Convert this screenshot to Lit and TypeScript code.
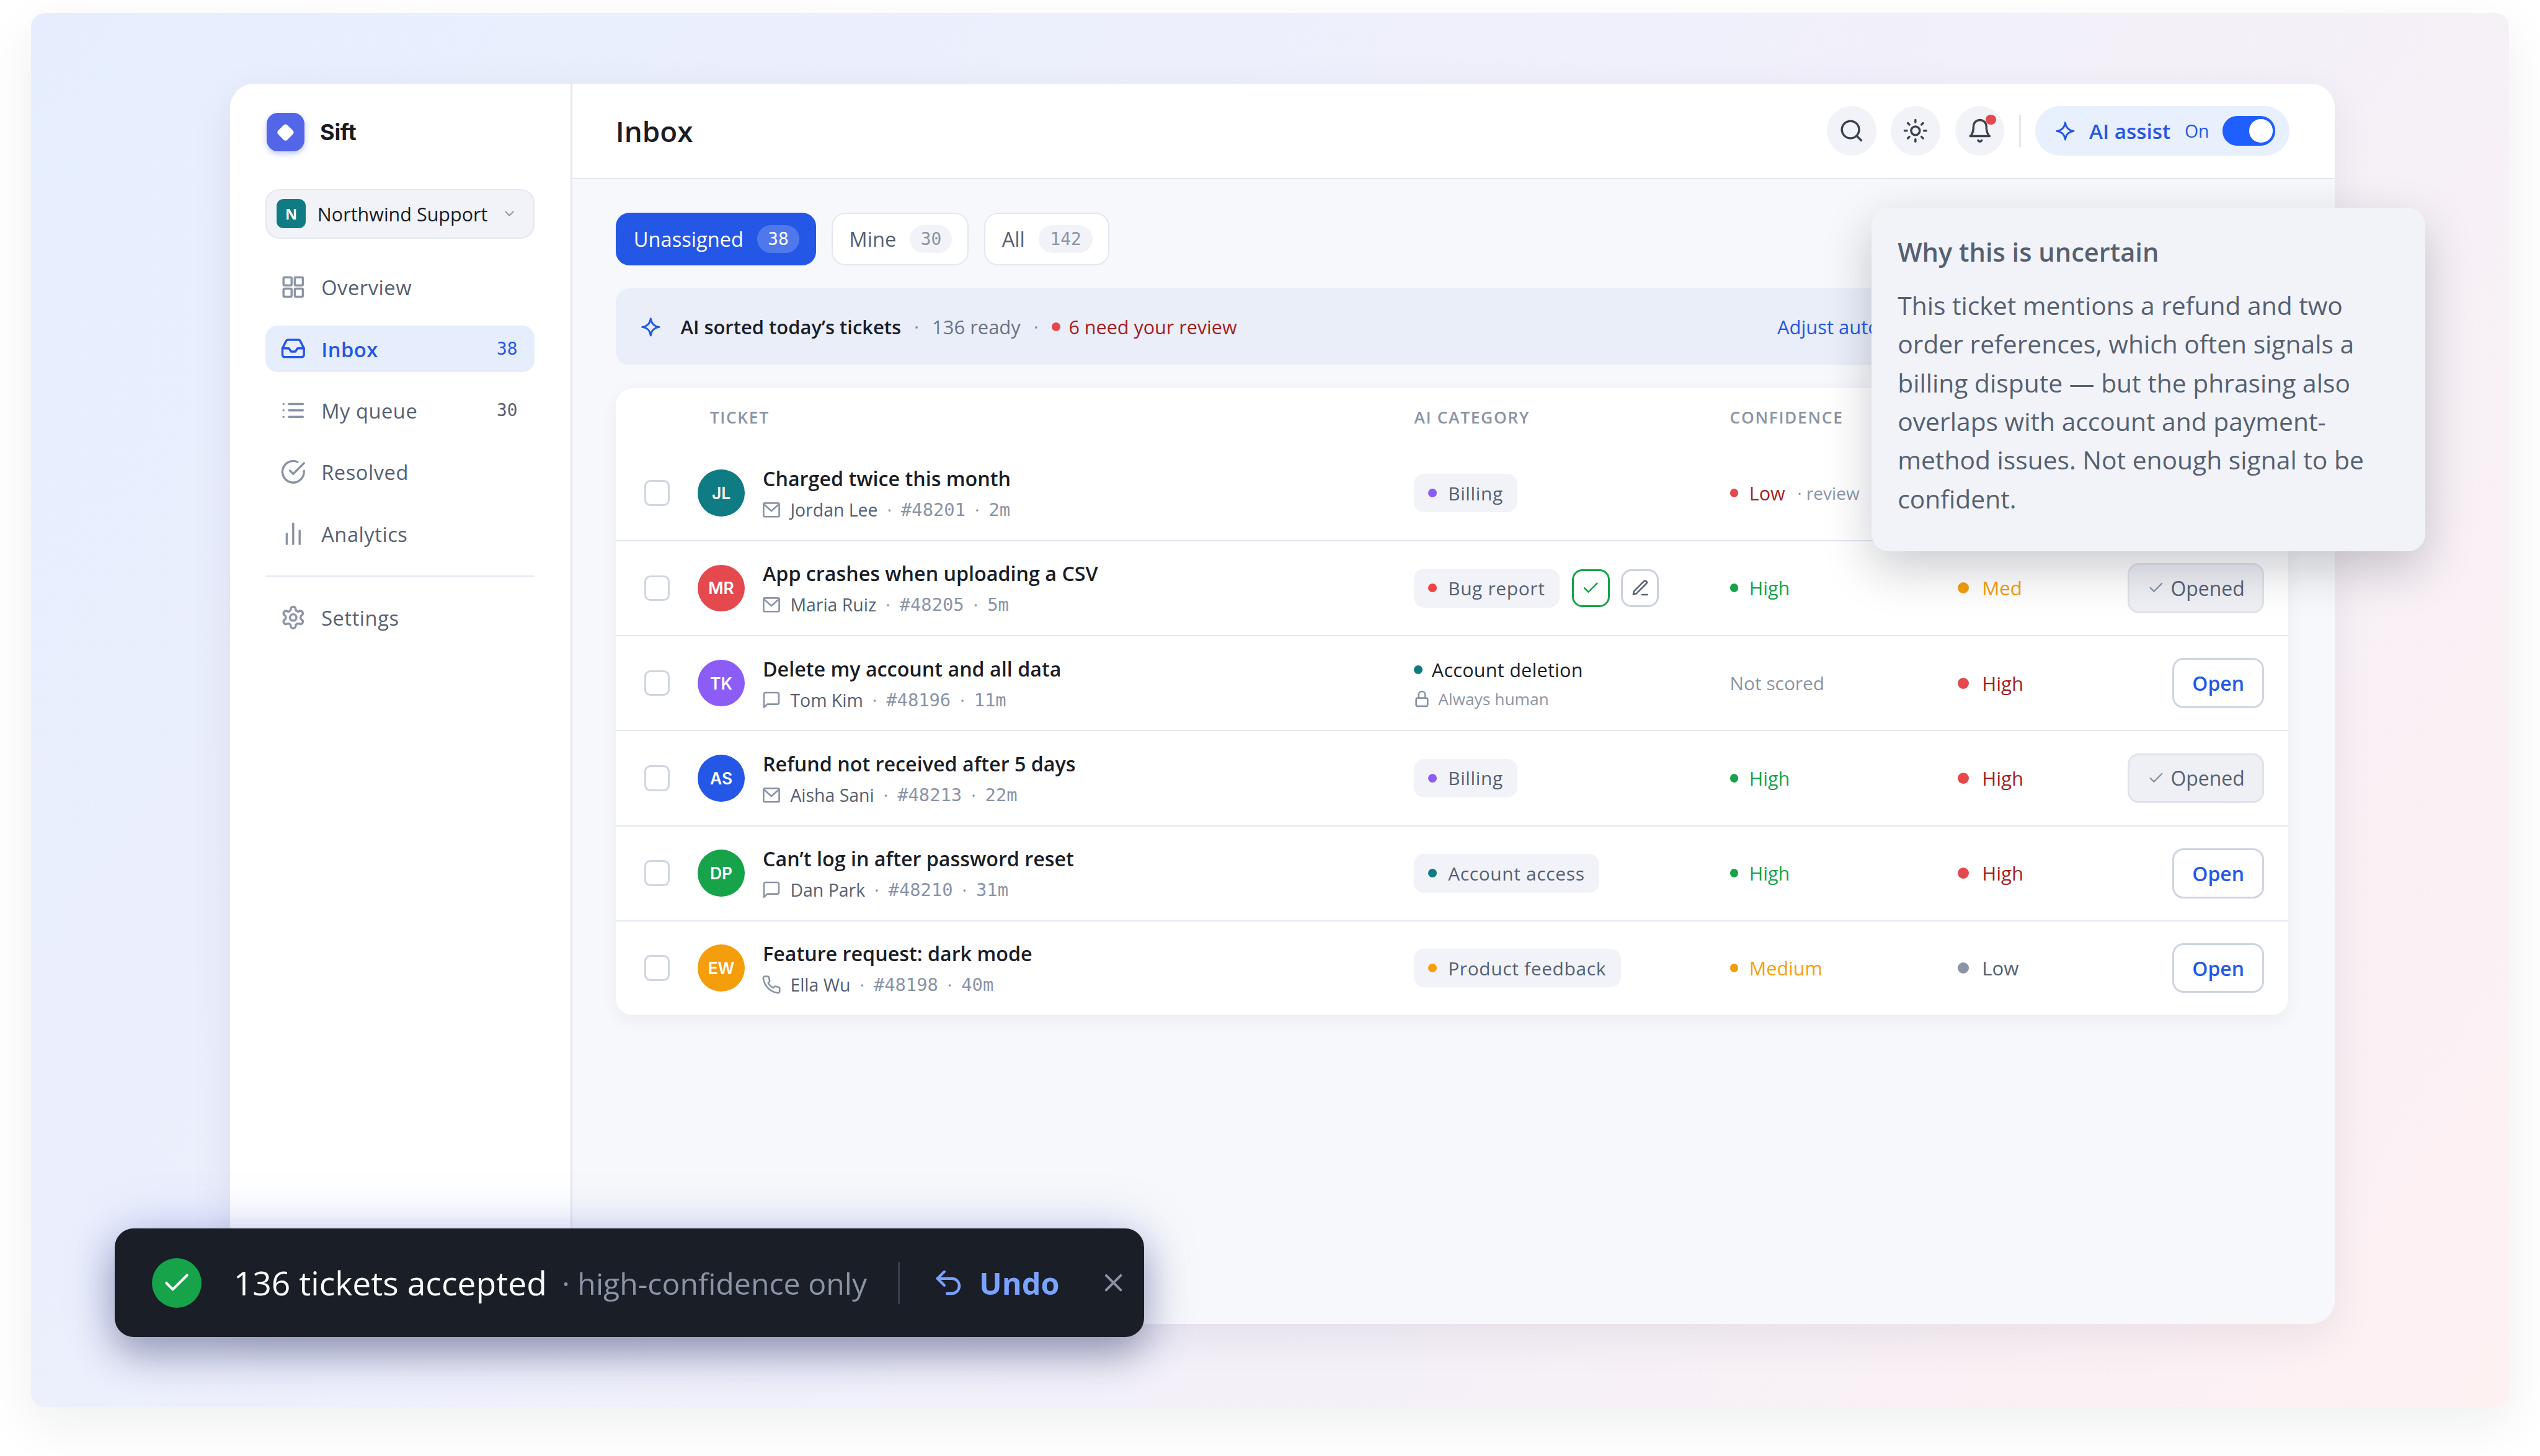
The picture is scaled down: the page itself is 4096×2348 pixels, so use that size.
import { LitElement, html, css, svg, nothing } from 'lit';
import { customElement } from 'lit/decorators.js';

// All lengths are in reference pixels; :host zoom brings them down to the window.
const icon = (size: number, body: unknown, sw = 2) => html`<svg class="ico" width=${size} height=${size} viewBox="0 0 24 24" fill="none" stroke="currentColor" stroke-width=${sw} stroke-linecap="round" stroke-linejoin="round">${body}</svg>`;

const P = {
  grid: svg`<rect x="3" y="3" width="7.5" height="7.5" rx="1"/><rect x="13.5" y="3" width="7.5" height="7.5" rx="1"/><rect x="3" y="13.5" width="7.5" height="7.5" rx="1"/><rect x="13.5" y="13.5" width="7.5" height="7.5" rx="1"/>`,
  inbox: svg`<path d="M22 12h-6l-2 3h-4l-2-3H2"/><path d="M5.45 5.11 2 12v6a2 2 0 0 0 2 2h16a2 2 0 0 0 2-2v-6l-3.45-6.89A2 2 0 0 0 16.76 4H7.24a2 2 0 0 0-1.79 1.11z"/>`,
  list: svg`<path d="M8 6h13"/><path d="M8 12h13"/><path d="M8 18h13"/><path d="M3 6h.01"/><path d="M3 12h.01"/><path d="M3 18h.01"/>`,
  done: svg`<path d="M22 11.08V12a10 10 0 1 1-5.93-9.14"/><path d="m9 11 3 3L22 4"/>`,
  bars: svg`<path d="M12 2.5v19"/><path d="M6 12v9.5"/><path d="M18 9v12.5"/>`,
  gear: svg`<path d="M12.22 2h-.44a2 2 0 0 0-2 2v.18a2 2 0 0 1-1 1.73l-.43.25a2 2 0 0 1-2 0l-.15-.08a2 2 0 0 0-2.73.73l-.22.38a2 2 0 0 0 .73 2.73l.15.1a2 2 0 0 1 1 1.72v.51a2 2 0 0 1-1 1.74l-.15.09a2 2 0 0 0-.73 2.73l.22.38a2 2 0 0 0 2.73.73l.15-.08a2 2 0 0 1 2 0l.43.25a2 2 0 0 1 1 1.73V20a2 2 0 0 0 2 2h.44a2 2 0 0 0 2-2v-.18a2 2 0 0 1 1-1.73l.43-.25a2 2 0 0 1 2 0l.15.08a2 2 0 0 0 2.73-.73l.22-.39a2 2 0 0 0-.73-2.73l-.15-.08a2 2 0 0 1-1-1.74v-.5a2 2 0 0 1 1-1.74l.15-.09a2 2 0 0 0 .73-2.73l-.22-.38a2 2 0 0 0-2.73-.73l-.15.08a2 2 0 0 1-2 0l-.43-.25a2 2 0 0 1-1-1.73V4a2 2 0 0 0-2-2z"/><circle cx="12" cy="12" r="3"/>`,
  mail: svg`<rect x="2.5" y="4" width="19" height="16.5" rx="1.5"/><path d="m3 5.5 9 8 9-8"/>`,
  chat: svg`<path d="M21 15a2 2 0 0 1-2 2H7l-4 4V5a2 2 0 0 1 2-2h14a2 2 0 0 1 2 2z"/>`,
  phone: svg`<path d="M22 16.92v3a2 2 0 0 1-2.18 2 19.79 19.79 0 0 1-8.63-3.07 19.5 19.5 0 0 1-6-6 19.79 19.79 0 0 1-3.07-8.67A2 2 0 0 1 4.11 2h3a2 2 0 0 1 2 1.72 12.84 12.84 0 0 0 .7 2.81 2 2 0 0 1-.45 2.11L8.09 9.91a16 16 0 0 0 6 6l1.27-1.27a2 2 0 0 1 2.11-.45 12.84 12.84 0 0 0 2.81.7A2 2 0 0 1 22 16.92z"/>`,
  lock: svg`<rect x="5" y="11" width="14" height="10" rx="2"/><path d="M8 11V7a4 4 0 0 1 8 0v4"/>`,
  search: svg`<circle cx="11" cy="11" r="8"/><path d="m21 21-4.3-4.3"/>`,
  sun: svg`<circle cx="12" cy="12" r="4"/><path d="M12 2v2"/><path d="M12 20v2"/><path d="m4.93 4.93 1.41 1.41"/><path d="m17.66 17.66 1.41 1.41"/><path d="M2 12h2"/><path d="M20 12h2"/><path d="m6.34 17.66-1.41 1.41"/><path d="m19.07 4.93-1.41 1.41"/>`,
  bell: svg`<path d="M6 8a6 6 0 0 1 12 0c0 7 3 9 3 9H3s3-2 3-9"/><path d="M10.3 21a1.94 1.94 0 0 0 3.4 0"/>`,
  spark: svg`<path d="M12 2.5c.7 5.6 3.9 8.8 9.5 9.5-5.6.7-8.8 3.9-9.5 9.5-.7-5.6-3.9-8.8-9.5-9.5 5.6-.7 8.8-3.9 9.5-9.5z"/>`,
  check: svg`<path d="M20 6 9 17l-5-5"/>`,
  pencil: svg`<path d="M14 20.5h7"/><path d="M16.5 3.5a2.12 2.12 0 0 1 3 3L7 19l-4 1 1-4z"/>`,
  undo: svg`<path d="M9 14 4 9l5-5"/><path d="M4 9h10.5a5.5 5.5 0 0 1 0 11H11"/>`,
  chevron: svg`<path d="m6 9 6 6 6-6"/>`,
  close: svg`<path d="M18 6 6 18"/><path d="m6 6 12 12"/>`,
};

type Tone = 'red' | 'green' | 'amber' | 'grey';

interface Ticket {
  initials: string;
  color: string;
  title: string;
  via: keyof typeof P;
  who: string;
  id: string;
  age: string;
  category: string;
  catDot: string;
  plain?: boolean;
  review?: boolean;
  conf: [Tone, string] | null;
  urgency: [Tone, string];
  opened?: boolean;
}

const TICKETS: Ticket[] = [
  { initials: 'JL', color: '#0f7b83', title: 'Charged twice this month', via: 'mail', who: 'Jordan Lee', id: '#48201', age: '2m', category: 'Billing', catDot: '#8b5cf6', conf: ['red', 'Low'], urgency: ['red', 'High'] },
  { initials: 'MR', color: '#e5484d', title: 'App crashes when uploading a CSV', via: 'mail', who: 'Maria Ruiz', id: '#48205', age: '5m', category: 'Bug report', catDot: '#ef4444', review: true, conf: ['green', 'High'], urgency: ['amber', 'Med'], opened: true },
  { initials: 'TK', color: '#8b5cf6', title: 'Delete my account and all data', via: 'chat', who: 'Tom Kim', id: '#48196', age: '11m', category: 'Account deletion', catDot: '#0f7b83', plain: true, conf: null, urgency: ['red', 'High'] },
  { initials: 'AS', color: '#2457e6', title: 'Refund not received after 5 days', via: 'mail', who: 'Aisha Sani', id: '#48213', age: '22m', category: 'Billing', catDot: '#8b5cf6', conf: ['green', 'High'], urgency: ['red', 'High'], opened: true },
  { initials: 'DP', color: '#16a34a', title: 'Can’t log in after password reset', via: 'chat', who: 'Dan Park', id: '#48210', age: '31m', category: 'Account access', catDot: '#0f7b83', conf: ['green', 'High'], urgency: ['red', 'High'] },
  { initials: 'EW', color: '#f59e0b', title: 'Feature request: dark mode', via: 'phone', who: 'Ella Wu', id: '#48198', age: '40m', category: 'Product feedback', catDot: '#f59e0b', conf: ['amber', 'Medium'], urgency: ['grey', 'Low'] },
];

const NAV: { label: string; ic: keyof typeof P; count?: string; active?: boolean }[] = [
  { label: 'Overview', ic: 'grid' },
  { label: 'Inbox', ic: 'inbox', count: '38', active: true },
  { label: 'My queue', ic: 'list', count: '30' },
  { label: 'Resolved', ic: 'done' },
  { label: 'Analytics', ic: 'bars' },
];

@customElement('app-root')
export class AppRoot extends LitElement {
  static override styles = css`
    :host {
      display: block;
      position: relative;
      zoom: 0.69377;
      width: 5904px;
      height: 3384px;
      overflow: hidden;
      background: #fff;
      color: #1a1d26;
      font-family: "Open Sans", "Noto Sans", sans-serif;
      --mono: "DejaVu Sans Mono", "Liberation Mono", monospace;
      --blue: #2457e6;
      --line: #e4e7ef;
      --grey: #8a94a6;
      --slate: #556072;
    }
    * { box-sizing: border-box; }
    .ico { display: block; flex: none; }

    .scene {
      position: absolute;
      left: 72px;
      top: 30px;
      width: 5760px;
      height: 3240px;
      padding: 165px 405px 193px 463px;
      border-radius: 32px;
      background: linear-gradient(125deg, #e6eefe 0%, #f0f0fb 50%, #fef1f2 100%);
      box-shadow: 0 40px 120px rgba(20, 24, 40, 0.07);
    }
    .window {
      display: flex;
      width: 100%;
      height: 100%;
      overflow: hidden;
      border-radius: 56px;
      background: #f7f8fb;
      box-shadow: 0 30px 100px rgba(40, 30, 60, 0.08);
    }

    .side {
      flex: none;
      width: 795px;
      padding: 68px 83px 0 82px;
      background: #fff;
      border-right: 5px solid var(--line);
    }
    .brand { display: flex; align-items: center; gap: 36px; height: 88px; margin: 0 0 88px 3px; }
    .logo {
      display: grid;
      place-items: center;
      width: 88px;
      height: 88px;
      border-radius: 26px;
      background: #5366e8;
      box-shadow: 0 6px 14px rgba(83, 102, 232, 0.35);
    }
    .logo i { width: 30px; height: 30px; border-radius: 6px; background: #fff; transform: rotate(45deg); }
    .brand b { font: 700 52px "Inter", sans-serif; letter-spacing: -0.5px; color: #1a1a1f; }
    .workspace {
      display: flex;
      align-items: center;
      height: 116px;
      padding: 0 38px 0 23px;
      margin-bottom: 58px;
      border: 4px solid var(--line);
      border-radius: 32px;
      background: #f1f3f8;
    }
    .tile {
      display: grid;
      place-items: center;
      width: 68px;
      height: 68px;
      margin-right: 27px;
      border-radius: 16px;
      background: #0f7b83;
      color: #fff;
      font-size: 34px;
      font-weight: 700;
    }
    .workspace span { flex: 1; font-size: 44px; font-weight: 500; white-space: nowrap; }
    .workspace .ico { color: var(--grey); }

    nav { display: flex; flex-direction: column; gap: 35.3px; }
    .item {
      display: flex;
      align-items: center;
      height: 108px;
      padding: 0 40px 0 34px;
      border-radius: 28px;
      color: var(--slate);
      font-size: 47px;
      letter-spacing: 0.8px;
    }
    .item .ico { color: var(--grey); margin-right: 36px; }
    .item span { flex: 1; padding-top: 3px; }
    .item em { font: 500 40px var(--mono); letter-spacing: 0; }
    .item.on { background: #e6edfc; color: var(--blue); font-weight: 600; }
    .item.on .ico { color: var(--blue); }
    .rule { height: 4px; margin: 43px 0 40px; background: var(--line); }

    main { flex: 1; min-width: 0; display: flex; flex-direction: column; }
    header {
      flex: none;
      display: flex;
      align-items: center;
      height: 221px;
      padding: 0 105px 0 101px;
      background: #fff;
      border-bottom: 4px solid var(--line);
    }
    h1 { flex: 1; margin: 0; font-size: 66px; font-weight: 600; }
    .round {
      position: relative;
      display: grid;
      place-items: center;
      width: 115px;
      height: 116px;
      margin-right: 34px;
      border-radius: 50%;
      background: #f1f3f8;
      color: #3b4352;
    }
    .ping { position: absolute; left: 72px; top: 20px; width: 24px; height: 24px; border-radius: 50%; background: #e5484d; }
    .vrule { width: 4px; height: 74px; margin-right: 34px; background: var(--line); }
    .assist {
      display: flex;
      align-items: center;
      width: 591px;
      height: 116px;
      padding: 0 34px 0 44px;
      border-radius: 58px;
      background: #e8effd;
      color: var(--blue);
      font-size: 41px;
      white-space: nowrap;
    }
    .assist b { flex: 1; font-size: 48px; font-weight: 600; margin-left: 31px; }
    .assist span { margin-right: 31px; }
    .toggle { position: relative; flex: none; width: 122px; height: 68px; border-radius: 34px; background: #1f5fff; }
    .toggle i { position: absolute; right: 6px; top: 7px; width: 54px; height: 54px; border-radius: 50%; background: #fff; }

    .body { flex: 1; padding: 78px 108px 0 102px; }
    .tabs { display: flex; gap: 36px; height: 123px; margin-bottom: 53.5px; }
    .tab {
      display: flex;
      align-items: center;
      gap: 32px;
      padding: 0 36px 0 38px;
      border: 4px solid var(--line);
      border-radius: 32px;
      background: #fff;
      color: var(--slate);
      font-size: 47px;
      font-weight: 500;
    }
    .tab em {
      display: grid;
      place-items: center;
      width: 98px;
      height: 64px;
      border-radius: 32px;
      background: #f1f3f8;
      color: var(--grey);
      font: 500 40px var(--mono);
    }
    .tab.all em { width: 126px; }
    .tab.on { border-color: var(--blue); background: var(--blue); color: #fff; }
    .tab.on em { background: rgba(255, 255, 255, 0.2); color: #fff; }

    .banner {
      display: flex;
      align-items: center;
      height: 178px;
      padding: 0 0 0 56px;
      margin-bottom: 53.5px;
      border-radius: 32px;
      background: #e9eef9;
      font-size: 44.6px;
      white-space: nowrap;
    }
    .banner .ico { color: var(--blue); margin-right: 44px; }
    .banner b { font-weight: 600; }
    .banner .sep { width: 36px; text-align: center; margin: 0 18px; color: var(--grey); }
    .banner .ready { color: #6b7485; }
    .banner .dot { width: 20px; height: 20px; margin-right: 20px; border-radius: 50%; background: #e5484d; }
    .banner .warn { flex: 1; color: #a61f1f; font-size: 44px; font-weight: 500; }
    .banner a { flex: none; width: 1188px; color: var(--blue); font-weight: 500; }

    .card {
      height: 1457px;
      overflow: hidden;
      border-radius: 40px;
      background: #fff;
      box-shadow: 0 12px 40px rgba(30, 40, 70, 0.05);
    }
    .row {
      display: grid;
      grid-template-columns: 190px 1665px 734px 530px 390px 1fr;
      align-items: center;
      height: 221px;
      border-bottom: 4px solid var(--line);
    }
    .row:last-child { border-bottom: 0; height: 217px; }
    .row.head { height: 135px; border: 0; color: var(--grey); font-size: 38px; font-weight: 600; letter-spacing: 2.4px; }
    .row.head .tick { padding-left: 28px; }
    .box { width: 60px; height: 60px; margin-left: 65px; border: 5px solid #cfd6e0; border-radius: 14px; }
    .tick { display: flex; align-items: center; gap: 42px; }
    .av {
      display: grid;
      place-items: center;
      width: 109px;
      height: 109px;
      border-radius: 50%;
      color: #fff;
      font: 600 38px "Inter", sans-serif;
    }
    .text { padding-bottom: 1px; }
    .title { font-size: 46.5px; font-weight: 600; line-height: 62px; margin-bottom: 17px; }
    .meta { display: flex; align-items: center; height: 50px; font-size: 41px; color: var(--slate); white-space: nowrap; font-weight: 500; }
    .meta .ico { color: var(--grey); margin: 0 21px 0 -3px; }
    .meta i { width: 54px; text-align: center; font-style: normal; color: var(--grey); }
    .meta u { font: 400 41.5px var(--mono); text-decoration: none; color: var(--grey); }

    .cat { display: flex; align-items: center; gap: 28px; }
    .pill {
      display: flex;
      align-items: center;
      gap: 26px;
      height: 90px;
      padding: 0 34px 0 33px;
      border-radius: 24px;
      background: #f1f3f8;
      color: var(--slate);
      font-size: 43px;
      font-weight: 500;
      letter-spacing: 1px;
    }
    .pill s { width: 20px; height: 20px; border-radius: 50%; }
    .mini { display: grid; place-items: center; width: 88px; height: 88px; margin-right: -1px; border: 5px solid #cbd2de; border-radius: 24px; color: var(--slate); }
    .mini.ok { border-color: #16a34a; color: #16a34a; }
    .plain { display: flex; flex-direction: column; gap: 20px; padding-top: 6px; }
    .plain div { display: flex; align-items: center; gap: 21px; font-size: 44px; letter-spacing: 0.4px; font-weight: 500; height: 48px; }
    .plain div s { width: 20px; height: 20px; border-radius: 50%; }
    .plain div + div { gap: 15px; color: var(--grey); font-size: 38px; letter-spacing: 0; font-weight: 400; }
    .plain div + div .ico { margin-left: -5px; }

    .lvl { display: flex; align-items: center; gap: 25px; font-size: 44px; font-weight: 500; white-space: nowrap; }
    .lvl s { width: 20px; height: 20px; border-radius: 50%; }
    .lvl.urg { gap: 30px; font-size: 45px; }
    .lvl.urg s { width: 26px; height: 26px; }
    .lvl small { margin-left: 3px; font-size: 40.5px; font-weight: 400; color: var(--grey); }
    .lvl.red { color: #a61f1f; } .lvl.red s { background: #e5484d; }
    .lvl.green { color: #16a34a; } .lvl.green s { background: #16a34a; }
    .lvl.amber { color: #f59e0b; } .lvl.amber s { background: #f59e0b; }
    .lvl.grey { color: var(--slate); } .lvl.grey s { background: var(--grey); }
    .none { color: var(--grey); font-size: 43px; }

    .act { display: flex; justify-content: flex-end; padding-right: 56px; }
    .btn {
      display: flex;
      align-items: center;
      justify-content: center;
      flex: none;
      height: 116px;
      width: 214px;
      border: 5px solid #ced5e0;
      border-radius: 26px;
      background: #fff;
      color: var(--blue);
      font-size: 46px;
      font-weight: 600;
    }
    .btn.opened { width: 317px; gap: 14px; border-color: #e0e3ea; background: #eef0f5; color: var(--slate); font-weight: 500; }
    .btn.opened .ico { color: var(--grey); }

    /* floats over the page */
    .tip {
      position: absolute;
      left: 4350px;
      top: 483px;
      width: 1287px;
      height: 799px;
      padding: 60px 61px;
      border-radius: 40px;
      background: #f1f3f8;
      box-shadow: 0 40px 110px rgba(20, 24, 40, 0.22);
      color: var(--slate);
    }
    .tip h2 { margin: 0 0 37px; font-size: 60px; line-height: 84px; font-weight: 600; }
    .tip p { margin: 0; font-size: 58.8px; line-height: 90px; }

    .toast {
      position: absolute;
      left: 266px;
      top: 2856px;
      display: flex;
      align-items: center;
      width: 2393px;
      height: 252px;
      padding-left: 87px;
      border-radius: 44px;
      background: #1a1e27;
      box-shadow: 0 40px 90px rgba(26, 30, 60, 0.35), 0 0 130px rgba(70, 100, 240, 0.22);
      color: #fff;
      white-space: nowrap;
    }
    .okc { display: grid; place-items: center; flex: none; width: 116px; height: 116px; margin-right: 74px; border-radius: 50%; background: #16a34a; }
    .toast b { font-size: 77px; font-weight: 500; }
    .toast span { margin-left: 35px; font-size: 69.5px; color: var(--grey); }
    .toast .v { flex: none; width: 4px; height: 98px; margin: 0 76px 0 72px; background: #3a3f4c; }
    .toast .un { color: #7aa2ff; margin-right: 33px; }
    .toast strong { font-size: 70px; font-weight: 700; color: #7aa2ff; }
    .toast .x { color: var(--grey); margin-left: 92px; }
  `;

  private renderRow(t: Ticket) {
    return html`<div class="row">
      <div class="box"></div>
      <div class="tick">
        <div class="av" style="background:${t.color}">${t.initials}</div>
        <div class="text">
          <div class="title">${t.title}</div>
          <div class="meta">${icon(46, P[t.via])}${t.who}<i>·</i><u>${t.id}</u><i>·</i><u>${t.age}</u></div>
        </div>
      </div>
      ${t.plain
        ? html`<div class="plain">
            <div><s style="background:${t.catDot}"></s>${t.category}</div>
            <div>${icon(46, P.lock)}Always human</div>
          </div>`
        : html`<div class="cat">
            <div class="pill"><s style="background:${t.catDot}"></s>${t.category}</div>
            ${t.review
              ? html`<div class="mini ok">${icon(44, P.check)}</div><div class="mini">${icon(44, P.pencil)}</div>`
              : nothing}
          </div>`}
      ${t.conf
        ? html`<div class="lvl ${t.conf[0]}"><s></s>${t.conf[1]}${t.conf[1] === 'Low' ? html`<small>· review</small>` : nothing}</div>`
        : html`<div class="none">Not scored</div>`}
      <div class="lvl urg ${t.urgency[0]}"><s></s>${t.urgency[1]}</div>
      <div class="act">
        ${t.opened
          ? html`<div class="btn opened">${icon(40, P.check)}Opened</div>`
          : html`<div class="btn">Open</div>`}
      </div>
    </div>`;
  }

  override render() {
    return html`
      <div class="scene">
        <div class="window">
          <aside class="side">
            <div class="brand"><div class="logo"><i></i></div><b>Sift</b></div>
            <div class="workspace"><div class="tile">N</div><span>Northwind Support</span>${icon(36, P.chevron)}</div>
            <nav>
              ${NAV.map((n) => html`<div class="item ${n.active ? 'on' : ''}">${icon(60, P[n.ic])}<span>${n.label}</span>${n.count ? html`<em>${n.count}</em>` : nothing}</div>`)}
            </nav>
            <div class="rule"></div>
            <div class="item">${icon(60, P.gear)}<span>Settings</span></div>
          </aside>
          <main>
            <header>
              <h1>Inbox</h1>
              <div class="round">${icon(60, P.search)}</div>
              <div class="round">${icon(60, P.sun)}</div>
              <div class="round">${icon(60, P.bell)}<i class="ping"></i></div>
              <div class="vrule"></div>
              <div class="assist">${icon(50, P.spark)}<b>AI assist</b><span>On</span><div class="toggle"><i></i></div></div>
            </header>
            <div class="body">
              <div class="tabs">
                <div class="tab on">Unassigned<em>38</em></div>
                <div class="tab">Mine<em>30</em></div>
                <div class="tab all">All<em>142</em></div>
              </div>
              <div class="banner">
                ${icon(50, P.spark)}
                <b>AI sorted today’s tickets</b><span class="sep">·</span>
                <span class="ready">136 ready</span><span class="sep">·</span>
                <i class="dot"></i><span class="warn">6 need your review</span>
                <a>Adjust auto-accept</a>
              </div>
              <div class="card">
                <div class="row head">
                  <div></div>
                  <div class="tick">TICKET</div>
                  <div>AI CATEGORY</div>
                  <div>CONFIDENCE</div>
                  <div>URGENCY</div>
                </div>
                ${TICKETS.map((t) => this.renderRow(t))}
              </div>
            </div>
          </main>
        </div>
      </div>

      <div class="tip">
        <h2>Why this is uncertain</h2>
        <p>This ticket mentions a refund and two order references, which often signals a billing dispute — but the phrasing also overlaps with account and payment-method issues. Not enough signal to be confident.</p>
      </div>

      <div class="toast">
        <div class="okc">${icon(72, P.check)}</div>
        <b>136 tickets accepted</b>
        <span>· high-confidence only</span>
        <div class="v"></div>
        <div class="un">${icon(76, P.undo)}</div>
        <strong>Undo</strong>
        <div class="x">${icon(68, P.close)}</div>
      </div>
    `;
  }
}
